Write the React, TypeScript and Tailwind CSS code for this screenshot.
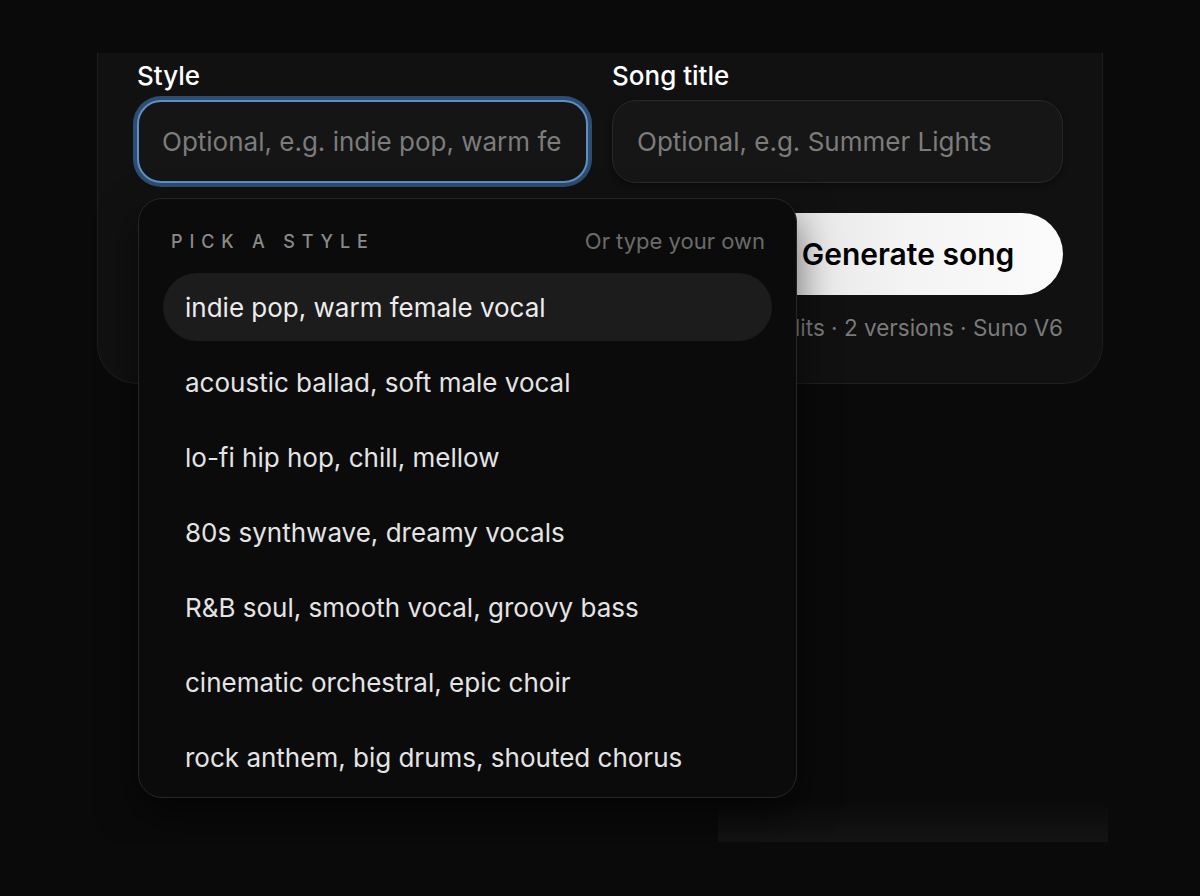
import { useState } from 'react';

const styles = [
  'indie pop, warm female vocal',
  'acoustic ballad, soft male vocal',
  'lo-fi hip hop, chill, mellow',
  '80s synthwave, dreamy vocals',
  'R&B soul, smooth vocal, groovy bass',
  'cinematic orchestral, epic choir',
  'rock anthem, big drums, shouted chorus',
];

function StylePicker({ active }: { active: number }) {
  return (
    <div className="absolute left-[1px] top-[calc(100%+15px)] z-10 w-[659px] rounded-[24px] border border-[#262626] bg-[#0b0b0b] pt-[29px] pb-[6px] shadow-[0_18px_40px_rgba(0,0,0,0.55)]">
      <div className="flex h-[26px] items-center justify-between pl-[32px] pr-[31px]">
        <span className="text-[18px] font-medium uppercase tracking-[0.38em] text-[#8a8a8a]">Pick a style</span>
        <span className="text-[22px] text-[#6b6b6b]">Or type your own</span>
      </div>
      <div className="mt-[19px] flex flex-col gap-[7px] px-[24px]">
        {styles.map((s, i) => (
          <div
            key={s}
            className={
              i === active
                ? 'flex h-[68px] items-center rounded-full bg-[#1c1c1c] px-[22px] text-[26px] text-[#ececec]'
                : 'flex h-[68px] items-center rounded-full px-[22px] text-[26px] text-[#e4e4e4]'
            }
          >
            {s}
          </div>
        ))}
      </div>
    </div>
  );
}

export default function App() {
  const [active] = useState(0);

  return (
    <div className="h-[896px] w-full overflow-hidden bg-[#0a0a0a] pt-[53px] font-['Inter','Noto_Sans',sans-serif] antialiased">
      <div className="mx-auto flex h-[789px] w-[1016px] flex-col overflow-hidden">
        <div className="mx-[5px] rounded-b-[40px] border border-t-0 border-[#1f1f1f] bg-[#111111] px-[39px] pt-[8px] pb-[40px]">
          <div className="grid grid-cols-2 gap-[24px]">
            <div className="relative flex flex-col">
              <label className="h-[30px] text-[26px] font-medium leading-[30px] text-white">Style</label>
              <div className="mt-[9px] flex h-[83px] items-center rounded-[24px] border-2 border-[#5f8fc4] bg-[#151515] px-[23px] shadow-[0_0_0_4px_#2d4d71]">
                <div className="min-w-0 flex-1 overflow-hidden whitespace-nowrap text-[26px] text-[#7c7c7c]">
                  Optional, e.g. indie pop, warm female vocal
                </div>
              </div>
              <StylePicker active={active} />
            </div>
            <div className="flex flex-col">
              <label className="h-[30px] text-[26px] font-medium leading-[30px] text-white">Song title</label>
              <div className="mt-[9px] flex h-[83px] items-center rounded-[24px] border border-[#292929] bg-[#161616] px-[24px] shadow-[0_2px_6px_rgba(0,0,0,0.4)]">
                <div className="min-w-0 flex-1 overflow-hidden whitespace-nowrap text-[26px] text-[#7c7c7c]">
                  Optional, e.g. Summer Lights
                </div>
              </div>
            </div>
          </div>

          <div className="mt-[30px] flex justify-end">
            <button className="flex h-[82px] w-[310px] items-center justify-center rounded-full bg-linear-to-r from-[#e2e2e2] via-[#f4f4f4] to-[#fbfbfb] text-[30px] font-semibold text-black">
              Generate song
            </button>
          </div>
          <div className="mt-[18px] text-right text-[22.5px] leading-[30px] text-[#7a7a7a]">
            10 credits · 2 versions · Suno V6
          </div>
        </div>

        <div className="flex-1" />
        <div className="h-[40px] w-[390px] self-end bg-linear-to-t from-[#141414] to-transparent" />
      </div>
    </div>
  );
}
